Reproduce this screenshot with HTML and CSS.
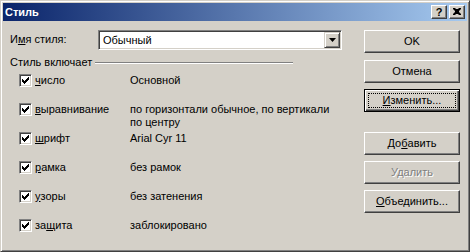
FILE: index.html
```html
<!DOCTYPE html>
<html lang="ru">
<head>
<meta charset="utf-8">
<title>Стиль</title>
<link rel="stylesheet" href="styles.css">
</head>
<body>
<div class="window">
  <div class="titlebar">
    <span class="title">Стиль</span>
    <div class="tbtns">
      <span class="tbtn help">?</span>
      <span class="tbtn close"><svg width="16" height="14" viewBox="0 0 16 14"><path d="M4 3h2l1 1h2l1-1h2v1l-2 2v1l2 2v1h-2l-1-1h-2l-1 1h-2v-1l2-2v-1l-2-2z" fill="#000"/></svg></span>
    </div>
  </div>
  <div class="client">
    <div class="left">
      <div class="namerow">
        <span class="namelbl">И<u>м</u>я стиля:</span>
        <div class="combo">
          <span class="val">Обычный</span>
          <span class="drop"><svg width="7" height="4" viewBox="0 0 7 4"><path d="M0 0h7L3.5 4z" fill="#000"/></svg></span>
        </div>
      </div>
      <div class="group">
        <span class="gtitle">Стиль включает</span>
        <span class="gline"></span>
      </div>
      <div class="rows">
        <div class="row">
          <span class="cb"><svg width="9" height="9" viewBox="0 0 9 9" shape-rendering="crispEdges"><path d="M1 3h1v3h-1zM2 4h1v3h-1zM3 5h1v3h-1zM4 4h1v3h-1zM5 3h1v3h-1zM6 2h1v3h-1zM7 1h1v3h-1z" fill="#000"/></svg></span>
          <span class="lbl"><u>ч</u>исло</span>
          <span class="desc">Основной</span>
        </div>
        <div class="row">
          <span class="cb"><svg width="9" height="9" viewBox="0 0 9 9" shape-rendering="crispEdges"><path d="M1 3h1v3h-1zM2 4h1v3h-1zM3 5h1v3h-1zM4 4h1v3h-1zM5 3h1v3h-1zM6 2h1v3h-1zM7 1h1v3h-1z" fill="#000"/></svg></span>
          <span class="lbl"><u>в</u>ыравнивание</span>
          <span class="desc">по горизонтали обычное, по вертикали<br>по центру</span>
        </div>
        <div class="row">
          <span class="cb"><svg width="9" height="9" viewBox="0 0 9 9" shape-rendering="crispEdges"><path d="M1 3h1v3h-1zM2 4h1v3h-1zM3 5h1v3h-1zM4 4h1v3h-1zM5 3h1v3h-1zM6 2h1v3h-1zM7 1h1v3h-1z" fill="#000"/></svg></span>
          <span class="lbl"><u>ш</u>рифт</span>
          <span class="desc">Arial Cyr 11</span>
        </div>
        <div class="row">
          <span class="cb"><svg width="9" height="9" viewBox="0 0 9 9" shape-rendering="crispEdges"><path d="M1 3h1v3h-1zM2 4h1v3h-1zM3 5h1v3h-1zM4 4h1v3h-1zM5 3h1v3h-1zM6 2h1v3h-1zM7 1h1v3h-1z" fill="#000"/></svg></span>
          <span class="lbl"><u>р</u>амка</span>
          <span class="desc">без рамок</span>
        </div>
        <div class="row">
          <span class="cb"><svg width="9" height="9" viewBox="0 0 9 9" shape-rendering="crispEdges"><path d="M1 3h1v3h-1zM2 4h1v3h-1zM3 5h1v3h-1zM4 4h1v3h-1zM5 3h1v3h-1zM6 2h1v3h-1zM7 1h1v3h-1z" fill="#000"/></svg></span>
          <span class="lbl"><u>у</u>зоры</span>
          <span class="desc">без затенения</span>
        </div>
        <div class="row">
          <span class="cb"><svg width="9" height="9" viewBox="0 0 9 9" shape-rendering="crispEdges"><path d="M1 3h1v3h-1zM2 4h1v3h-1zM3 5h1v3h-1zM4 4h1v3h-1zM5 3h1v3h-1zM6 2h1v3h-1zM7 1h1v3h-1z" fill="#000"/></svg></span>
          <span class="lbl">за<u>щ</u>ита</span>
          <span class="desc">заблокировано</span>
        </div>
      </div>
    </div>
    <div class="right">
      <div class="btn b-ok">OK</div>
      <div class="btn b-cancel">Отмена</div>
      <div class="btn default b-edit"><u>И</u>зменить...</div>
      <div class="btn b-add">До<u>б</u>авить</div>
      <div class="btn disabled b-del">Удалить</div>
      <div class="btn b-merge"><u>О</u>бъединить...</div>
    </div>
  </div>
</div>
</body>
</html>
```
FILE: styles.css
```css
html, body {
  margin: 0;
  padding: 0;
  background: #d4d0c8;
}
body {
  font-family: "Liberation Sans", Arial, sans-serif;
  font-size: 11px;
  line-height: 13px;
  color: #000;
}
u { text-decoration: underline; text-underline-offset: 1px; }

.window {
  width: 470px;
  height: 252px;
  box-sizing: border-box;
  border: 1px solid;
  border-color: #d4d0c8 #404040 #404040 #d4d0c8;
  box-shadow: inset 1px 1px #fff, inset -1px -1px #808080;
  padding: 2px;
  background: #d4d0c8;
  display: flex;
  flex-direction: column;
}

.titlebar {
  height: 18px;
  background: linear-gradient(to right, #0a246a, #a6caf0);
  display: flex;
  align-items: center;
  justify-content: space-between;
  padding: 0 2px 0 2px;
}
.title {
  color: #fff;
  font-weight: bold;
  font-size: 11px;
  line-height: 13px;
}
.tbtns {
  display: flex;
  gap: 2px;
}
.tbtn {
  width: 16px;
  height: 14px;
  box-sizing: border-box;
  background: #d4d0c8;
  border-top: 1px solid #fff;
  border-left: 1px solid #fff;
  border-right: 1px solid #404040;
  border-bottom: 1px solid #404040;
  box-shadow: inset -1px -1px #808080;
  display: flex;
  align-items: center;
  justify-content: center;
  position: relative;
}
.tbtn.help {
  font-weight: bold;
  font-size: 11px;
  line-height: 12px;
}
.tbtn.close svg {
  position: absolute;
  left: -1px;
  top: -1px;
}

.client {
  flex: 1;
  display: flex;
  padding-left: 7px;
}
.left {
  width: 332px;
}
.namerow {
  margin-top: 9px;
  height: 20px;
  display: flex;
  align-items: center;
}
.namelbl {
  width: 88px;
  margin-top: -2px;
}
.combo {
  width: 244px;
  height: 20px;
  box-sizing: border-box;
  border-top: 1px solid #808080;
  border-left: 1px solid #808080;
  border-right: 1px solid #fff;
  border-bottom: 1px solid #fff;
  box-shadow: inset 1px 1px #404040, inset -1px -1px #d4d0c8;
  background: #fff;
  padding: 1px;
  display: flex;
  align-items: center;
}
.combo .val {
  flex: 1;
  padding-left: 3px;
}
.drop {
  width: 16px;
  height: 16px;
  box-sizing: border-box;
  background: #d4d0c8;
  border-top: 1px solid #d4d0c8;
  border-left: 1px solid #d4d0c8;
  border-right: 1px solid #404040;
  border-bottom: 1px solid #404040;
  box-shadow: inset 1px 1px #fff, inset -1px -1px #808080;
  display: flex;
  align-items: center;
  justify-content: center;
}

.group {
  margin-top: 6px;
  width: 283px;
  display: flex;
  align-items: center;
}
.gline {
  flex: 1;
  height: 0;
  border-top: 1px solid #808080;
  border-bottom: 1px solid #fff;
  margin-left: 3px;
}

.rows {
  display: flex;
  flex-direction: column;
}
.row {
  height: 29px;
  box-sizing: border-box;
  padding-top: 5px;
  display: flex;
  align-items: flex-start;
}
.cb {
  width: 13px;
  height: 13px;
  box-sizing: border-box;
  margin-left: 9px;
  margin-right: 3px;
  border-top: 1px solid #808080;
  border-left: 1px solid #808080;
  border-right: 1px solid #fff;
  border-bottom: 1px solid #fff;
  box-shadow: inset 1px 1px #404040, inset -1px -1px #d4d0c8;
  background: #fff;
  padding: 1px;
  display: block;
}
.cb svg { display: block; }
.lbl {
  width: 95px;
}
.desc {
  flex: 1;
}

.right {
  margin-left: 22px;
  width: 96px;
  display: flex;
  flex-direction: column;
}
.btn {
  height: 23px;
  box-sizing: border-box;
  border-top: 1px solid #fff;
  border-left: 1px solid #fff;
  border-right: 1px solid #404040;
  border-bottom: 1px solid #404040;
  box-shadow: inset -1px -1px #808080;
  display: flex;
  align-items: center;
  justify-content: center;
  position: relative;
}
.btn.default {
  border: 1px solid #000;
  box-shadow: inset 1px 1px #fff, inset -1px -1px #404040, inset -2px -2px #808080;
}
.btn.default::after {
  content: "";
  position: absolute;
  left: 3px;
  top: 3px;
  right: 3px;
  bottom: 3px;
  border: 1px dotted #000;
}
.btn.disabled {
  color: #808080;
  text-shadow: 1px 1px #fff;
}
.b-ok { margin-top: 9px; }
.b-cancel { margin-top: 7px; }
.b-edit { margin-top: 6px; }
.b-add { margin-top: 20px; }
.b-del { margin-top: 6px; }
.b-merge { margin-top: 6px; }
```
